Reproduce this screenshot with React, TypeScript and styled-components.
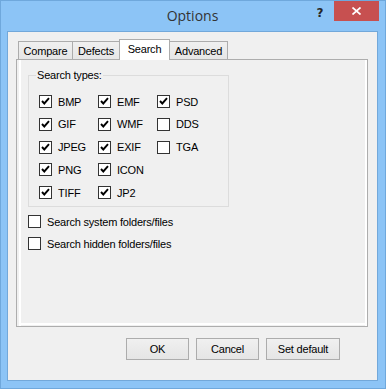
import { FC } from "react"
import styled, { createGlobalStyle } from "styled-components"

const GlobalStyle = createGlobalStyle`
  html, body {
    margin: 0;
    padding: 0;
    background: #fff;
  }
  * {
    box-sizing: border-box;
  }
`

const Window = styled.div`
  width: 386px;
  height: 389px;
  border: 1px solid #6fa8dc;
  background: #8cc4f6;
  padding: 0 7px 7px 6px;
  display: flex;
  flex-direction: column;
  font-family: "Liberation Sans", Arial, sans-serif;
  font-size: 11px;
  letter-spacing: -0.2px;
  color: #000;
`

const TitleBar = styled.div`
  height: 30px;
  display: grid;
  grid-template-columns: 1fr auto 1fr;
  align-items: start;
`

const Title = styled.div`
  grid-column: 2;
  font-family: "Open Sans", "Noto Sans", sans-serif;
  font-size: 14px;
  letter-spacing: 0;
  line-height: 29px;
  color: #333;
`

const Caption = styled.div`
  grid-column: 3;
  justify-self: end;
  display: flex;
  align-items: flex-start;
  margin-right: -1px;
`

const HelpButton = styled.div`
  width: 26px;
  height: 20px;
  display: flex;
  align-items: center;
  justify-content: center;
  font-family: "DejaVu Sans", sans-serif;
  font-weight: 700;
  font-size: 12px;
  color: #262626;
  padding-top: 4px;
  margin-right: 1px;
`

const CloseButton = styled.div`
  width: 45px;
  height: 20px;
  background: #c75050;
  display: flex;
  align-items: center;
  justify-content: center;
`

const Client = styled.div`
  flex: 1;
  border: 1px solid #72a8da;
  background: #f0f0f0;
  padding: 7px 9px 20px 8px;
  display: flex;
  flex-direction: column;
`

const TabStrip = styled.div`
  height: 20px;
  display: flex;
  align-items: flex-end;
  padding-left: 2px;
`

const Tab = styled.div<{ $active?: boolean; $w: number }>`
  position: relative;
  width: ${(p) => p.$w}px;
  height: ${(p) => (p.$active ? 21 : 18)}px;
  margin-left: -1px;
  margin-bottom: ${(p) => (p.$active ? -1 : 0)}px;
  z-index: ${(p) => (p.$active ? 1 : 0)};
  border: 1px solid #acacac;
  border-bottom: none;
  background: ${(p) => (p.$active ? "#fff" : "linear-gradient(#f0f0f0, #e6e6e6)")};
  display: flex;
  align-items: center;
  justify-content: center;
  padding-bottom: ${(p) => (p.$active ? 3 : 0)}px;
  &:first-child {
    margin-left: 0;
  }
`

const Panel = styled.div`
  height: 268px;
  border: 1px solid #adadad;
  box-shadow: inset 2px 0 0 #f0f0f0, inset 4px 0 0 #fff, inset -2px 0 0 #fff,
    inset 0 -1px 0 #f0f0f0, inset 0 -3px 0 #fff;
  padding: 9px 0 0 11px;
  display: flex;
  flex-direction: column;
`

const Group = styled.fieldset`
  width: 201px;
  margin: 0;
  padding: 0 0 7px 10px;
  border: 1px solid #dcdcdc;
`

const Legend = styled.legend`
  margin-left: -3px;
  padding: 0 1px;
  line-height: 13px;
`

const TypeGrid = styled.div`
  margin-top: 13px;
  display: grid;
  grid-auto-flow: column;
  grid-template-columns: repeat(3, 59px);
  grid-template-rows: repeat(5, 13px);
  row-gap: 9.75px;
`

const Options = styled.div`
  margin-top: 8px;
  display: flex;
  flex-direction: column;
  gap: 9px;
`

const Item = styled.label`
  display: flex;
  align-items: center;
  gap: 6px;
  height: 13px;
  white-space: nowrap;
`

const Box = styled.span`
  width: 13px;
  height: 13px;
  border: 1px solid #333;
  background: #fff;
  display: flex;
  flex-shrink: 0;
`

const ButtonRow = styled.div`
  margin-top: 11px;
  padding-right: 28px;
  display: flex;
  justify-content: flex-end;
  gap: 7px;
`

const Button = styled.div<{ $w: number }>`
  width: ${(p) => p.$w}px;
  height: 22px;
  border: 1px solid #acacac;
  background: linear-gradient(#f0f0f0, #e5e5e5);
  display: flex;
  align-items: center;
  justify-content: center;
`

const Check: FC<{ label: string; checked?: boolean }> = ({ label, checked }) => (
  <Item>
    <Box>
      {checked && (
        <svg width="11" height="11" viewBox="0 0 11 11">
          <polyline points="2,5 4.3,7.5 9,2.2" fill="none" stroke="#000" strokeWidth="1.9" />
        </svg>
      )}
    </Box>
    <span>{label}</span>
  </Item>
)

const types: [string, boolean][] = [
  ["BMP", true], ["GIF", true], ["JPEG", true], ["PNG", true], ["TIFF", true],
  ["EMF", true], ["WMF", true], ["EXIF", true], ["ICON", true], ["JP2", true],
  ["PSD", true], ["DDS", false], ["TGA", false],
]

const App: FC = () => (
  <>
    <GlobalStyle />
    <Window>
      <TitleBar>
        <Title>Options</Title>
        <Caption>
          <HelpButton>?</HelpButton>
          <CloseButton>
            <svg width="9" height="8" viewBox="0 0 9 8">
              <path d="M0.5 0.5 L8.5 7.5 M8.5 0.5 L0.5 7.5" stroke="#fff" strokeWidth="1.7" />
            </svg>
          </CloseButton>
        </Caption>
      </TitleBar>

      <Client>
        <TabStrip>
          <Tab $w={55}>Compare</Tab>
          <Tab $w={48}>Defects</Tab>
          <Tab $w={51} $active>Search</Tab>
          <Tab $w={59}>Advanced</Tab>
        </TabStrip>

        <Panel>
          <Group>
            <Legend>Search types:</Legend>
            <TypeGrid>
              {types.map(([name, on]) => (
                <Check key={name} label={name} checked={on} />
              ))}
            </TypeGrid>
          </Group>

          <Options>
            <Check label="Search system folders/files" />
            <Check label="Search hidden folders/files" />
          </Options>
        </Panel>

        <ButtonRow>
          <Button $w={63}>OK</Button>
          <Button $w={63}>Cancel</Button>
          <Button $w={74}>Set default</Button>
        </ButtonRow>
      </Client>
    </Window>
  </>
)

export default App
